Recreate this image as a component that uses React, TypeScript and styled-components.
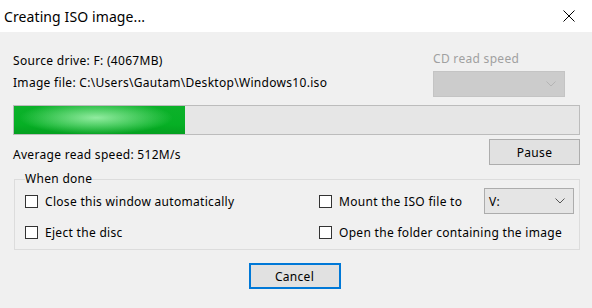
import React from 'react';
import styled, { createGlobalStyle } from 'styled-components';

const GlobalStyle = createGlobalStyle`
  html, body {
    margin: 0;
    padding: 0;
    background: #f0f0f0;
  }
  body {
    font-family: 'Noto Sans', 'Open Sans', sans-serif;
    font-size: 12px;
    letter-spacing: 0.3px;
    color: #000;
  }
`;

const Window = styled.div`
  width: 592px;
  height: 308px;
  background: #f0f0f0;
  overflow: hidden;
`;

const TitleBar = styled.div`
  height: 32px;
  background: #fff;
  display: flex;
  align-items: center;
  justify-content: space-between;
  padding-left: 4px;
  box-sizing: border-box;
`;

const Title = styled.span`
  font-size: 14px;
  letter-spacing: 0.1px;
`;

const CloseButton = styled.button`
  width: 46px;
  height: 32px;
  border: 0;
  background: transparent;
  display: flex;
  align-items: center;
  justify-content: center;
  padding: 0;
`;

const Content = styled.div`
  padding: 18px 12px 0 13px;
`;

const TopRow = styled.div`
  display: flex;
  justify-content: space-between;
`;

const InfoLine = styled.div`
  line-height: 22px;
`;

const SpeedBox = styled.div`
  width: 132px;
  margin-right: 15px;
`;

const DisabledLabel = styled.div`
  color: #a0a0a0;
  line-height: 18px;
`;

const Combo = styled.div<{ $disabled?: boolean; $width: number }>`
  width: ${(p) => p.$width}px;
  height: 26px;
  box-sizing: border-box;
  margin-top: ${(p) => (p.$disabled ? 3 : 0)}px;
  border: 1px solid ${(p) => (p.$disabled ? '#c4c4c4' : '#acacac')};
  background: ${(p) => (p.$disabled ? '#cccccc' : '#e5e5e5')};
  display: flex;
  align-items: center;
  justify-content: space-between;
  padding: 0 8px 0 4px;
`;

const Progress = styled.div`
  margin-top: 8px;
  height: 30px;
  box-sizing: border-box;
  border: 1px solid #bcbcbc;
  background: #e6e6e6;
`;

const ProgressFill = styled.div`
  height: 100%;
  background:
    radial-gradient(ellipse 45% 60% at 48% 42%, rgba(180, 250, 190, 0.8), rgba(180, 250, 190, 0) 100%),
    linear-gradient(#0cb12a, #06b025 65%, #04a020);
`;

const StatusRow = styled.div`
  margin-top: 4px;
  display: flex;
  justify-content: space-between;
  align-items: flex-end;
`;

const StatusText = styled.div`
  line-height: 18px;
  margin-bottom: 1px;
`;

const Button = styled.button<{ $focused?: boolean }>`
  width: ${(p) => (p.$focused ? 92 : 91)}px;
  height: 26px;
  box-sizing: border-box;
  border: ${(p) => (p.$focused ? '2px solid #0078d7' : '1px solid #adadad')};
  background: #e1e1e1;
  font: inherit;
  letter-spacing: inherit;
  color: #000;
  padding: 0;
`;

const Group = styled.fieldset`
  margin: 6px 0 0 1px;
  border: 1px solid #dcdcdc;
  padding: 1px 5px 7px 10px;
  min-width: 0;
`;

const Legend = styled.legend`
  padding: 0;
  line-height: 16px;
`;

const OptionsGrid = styled.div`
  display: grid;
  grid-template-columns: 294px 1fr;
  grid-template-rows: 26px 20px;
  row-gap: 8px;
`;

const Cell = styled.div`
  display: flex;
  align-items: center;
`;

const Check = styled.label`
  display: flex;
  align-items: center;
  gap: 7px;
`;

const Box = styled.span`
  width: 13px;
  height: 13px;
  box-sizing: border-box;
  border: 1px solid #333;
  background: #fff;
`;

const PushRight = styled.div`
  margin-left: auto;
`;

const Footer = styled.div`
  display: flex;
  justify-content: center;
  margin-top: 13px;
  padding-right: 4px;
`;

const Chevron = ({ color }: { color: string }) => (
  <svg width="10" height="6" viewBox="0 0 10 6">
    <path d="M0.5 0.5 L5 5 L9.5 0.5" fill="none" stroke={color} strokeWidth="1" />
  </svg>
);

const Checkbox = ({ label }: { label: string }) => (
  <Check>
    <Box />
    <span>{label}</span>
  </Check>
);

export default function App() {
  return (
    <Window>
      <GlobalStyle />
      <TitleBar>
        <Title>Creating ISO image...</Title>
        <CloseButton aria-label="Close">
          <svg width="12" height="12" viewBox="0 0 12 12">
            <path d="M0.5 0.5 L11.5 11.5 M11.5 0.5 L0.5 11.5" stroke="#000" strokeWidth="1" />
          </svg>
        </CloseButton>
      </TitleBar>
      <Content>
        <TopRow>
          <div>
            <InfoLine>Source drive: F: (4067MB)</InfoLine>
            <InfoLine>Image file: C:\Users\Gautam\Desktop\Windows10.iso</InfoLine>
          </div>
          <SpeedBox>
            <DisabledLabel>CD read speed</DisabledLabel>
            <Combo $disabled $width={132}>
              <span />
              <Chevron color="#b4b4b4" />
            </Combo>
          </SpeedBox>
        </TopRow>
        <Progress>
          <ProgressFill style={{ width: `${(171 / 565) * 100}%` }} />
        </Progress>
        <StatusRow>
          <StatusText>Average read speed: 512M/s</StatusText>
          <Button>Pause</Button>
        </StatusRow>
        <Group>
          <Legend>When done</Legend>
          <OptionsGrid>
            <Cell>
              <Checkbox label="Close this window automatically" />
            </Cell>
            <Cell>
              <Checkbox label="Mount the ISO file to" />
              <PushRight>
                <Combo $width={90}>
                  <span>V:</span>
                  <Chevron color="#555" />
                </Combo>
              </PushRight>
            </Cell>
            <Cell>
              <Checkbox label="Eject the disc" />
            </Cell>
            <Cell>
              <Checkbox label="Open the folder containing the image" />
            </Cell>
          </OptionsGrid>
        </Group>
        <Footer>
          <Button $focused>Cancel</Button>
        </Footer>
      </Content>
    </Window>
  );
}
